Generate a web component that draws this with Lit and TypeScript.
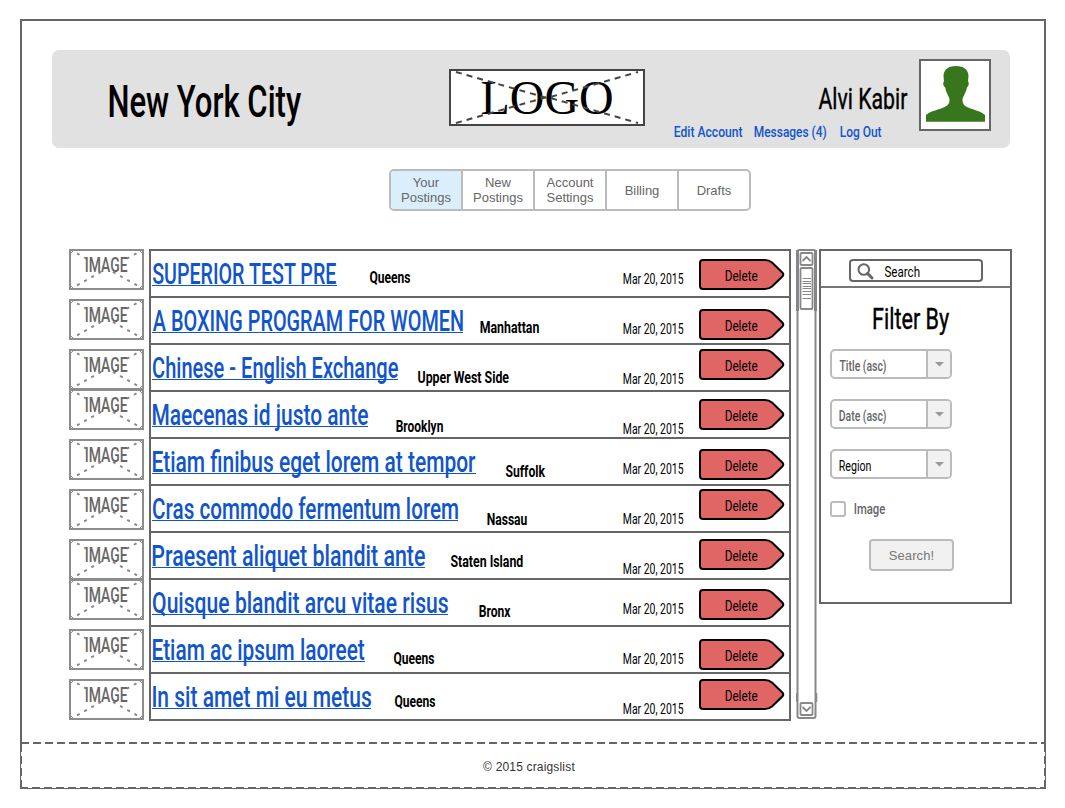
import { LitElement, html, svg, css } from "lit";
import { customElement } from "lit/decorators.js";

interface Posting {
  title: string;
  titleWidth: number;
  region: string;
  regionGap: number;
  regionWidth: number;
  regionTop: number;
  dateTop: number;
  deleteTop: number;
  thumbGap: number;
}

const p = (
  title: string, titleWidth: number, region: string, regionGap: number, regionWidth: number,
  regionTop: number, dateTop: number, deleteTop: number, thumbGap: number,
): Posting => ({ title, titleWidth, region, regionGap, regionWidth, regionTop, dateTop, deleteTop, thumbGap });

const POSTINGS: Posting[] = [
  p("SUPERIOR TEST PRE", 185, "Queens", 32, 41, 21, 23, 8, 0),
  p("A BOXING PROGRAM FOR WOMEN", 311, "Manhattan", 17, 59, 24, 26, 11, 9),
  p("Chinese - English Exchange", 246, "Upper West Side", 19, 92, 27, 29, 4, 9),
  p("Maecenas id justo ante", 216, "Brooklyn", 28, 47, 29, 32, 7, -1),
  p("Etiam finibus eget lorem at tempor", 324, "Suffolk", 29, 40, 27, 25, 10, 9),
  p("Cras commodo fermentum lorem", 306, "Nassau", 29, 40, 28, 28, 3, 9),
  p("Praesent aliquet blandit ante", 273, "Staten Island", 25, 73, 23, 31, 6, 9),
  p("Quisque blandit arcu vitae risus", 296, "Bronx", 31, 31, 26, 24, 9, -1),
  p("Etiam ac ipsum laoreet", 213, "Queens", 28, 41, 26, 27, 12, 9),
  p("In sit amet mi eu metus", 219, "Queens", 23, 41, 22, 30, 5, 9),
];

const pen = document.createElement("canvas").getContext("2d")!;

/* Text whose ink starts at x and spans the given width, narrowed from its natural setting. */
const narrow = (
  text: string, x: number, y: number, width: number, size: number, weight = 400, family = "Roboto",
) => {
  pen.font = `${weight} ${size}px "${family}"`;
  const m = pen.measureText(text);
  const k = width / (m.actualBoundingBoxLeft + m.actualBoundingBoxRight);
  return svg`<text transform="translate(${x + m.actualBoundingBoxLeft * k} ${y}) scale(${k} 1)"
    font-size=${size} font-weight=${weight}>${text}</text>`;
};

/* Condensed lettering in a box as tall as a capital. */
const fit = (text: string, width: number, size: number, cls = "", weight = 400, underline = false) => {
  const cap = Math.round(size * 0.711);
  return html`<svg class="fit ${cls}" width=${width} height=${cap}>
    ${underline ? narrow(text, 0.8, cap, width - 0.8, size, weight) : narrow(text, 0.5, cap, width, size, weight)}
    ${underline ? svg`<rect x="0" y=${cap + 1} width=${width} height="1"></rect>` : ""}
  </svg>`;
};

@customElement("app-root")
export class AppRoot extends LitElement {
  static styles = css`
    :host { display: block; box-sizing: border-box; width: 1065px; height: 808px; padding: 19px 19px 19px 20px; background: #fff; font-family: "Liberation Sans", Arial, sans-serif; overflow: hidden; }
    * { box-sizing: border-box; }
    svg { display: block; flex: none; overflow: visible; }
    .fit { font-family: Roboto, sans-serif; fill: #000; }
    .frame { width: 1026px; height: 770px; border: 2px solid #666; display: flex; flex-direction: column; }
    .header { height: 98px; flex: none; margin: 29px 34px 0 30px; border-radius: 7px; background: #e1e1e1; display: flex; align-items: flex-start; }
    .city { margin: 36px 0 0 57px; }
    .logo { margin: 19px 0 0 148px; }
    .logo text { font-family: "Liberation Serif", serif; }
    .account { width: 233px; margin: 38px 0 0 29px; display: flex; flex-direction: column; }
    .name { align-self: flex-end; }
    .name, .heading { stroke: #000; stroke-width: 0.4px; }
    .links { display: flex; margin-top: 16.5px; }
    .link { fill: #1155cc; }
    .links .link { margin-right: 12px; }
    .links .link + .link { margin-right: 14px; }
    .avatar { margin: 9px 0 0 12px; }
    .tabs { display: flex; flex: none; width: 362px; height: 42px; margin: 21px 0 0 367px; border: 2px solid #bbb; border-radius: 5px; overflow: hidden; }
    .tab { width: 72px; display: flex; align-items: center; justify-content: center; text-align: center; font-size: 13px; line-height: 15px; color: #666; border-right: 2px solid #bbb; padding: 0 8px; }
    .tab:first-child { background: #daeefc; }
    .tab:last-child { border-right: 0; width: 70px; }
    .main { display: flex; align-items: flex-start; flex: none; height: 472px; margin: 38px 0 0 47px; }
    .thumbs { width: 75px; flex: none; }
    .list { width: 642px; height: 472px; flex: none; margin-left: 5px; border: 2px solid #666; border-top: 0; }
    .row { display: flex; align-items: flex-start; height: 47px; border-top: 2px solid #666; }
    .title { margin: 12px 0 0 1px; fill: #1155cc; }
    .date { margin-left: auto; }
    .delete { margin: 0 4px 0 16px; }
    .delete text { font-family: Roboto, sans-serif; }
    .scroll { margin-left: 5px; }
    .panel { width: 193px; height: 355px; flex: none; margin-left: 2px; border: 2px solid #666; display: flex; flex-direction: column; align-items: flex-start; }
    .searchbar { width: 100%; height: 37px; flex: none; border-bottom: 2px solid #777; padding: 8px 0 0 28px; }
    .search { width: 134px; height: 23px; border: 2px solid #666; border-radius: 4px; display: flex; align-items: flex-start; padding: 2px 0 0 6px; }
    .search .fit { margin: 4px 0 0 10px; }
    .heading { margin: 20px 0 20px 52px; }
    .select { display: flex; width: 122px; height: 30px; flex: none; margin: 0 0 20px 9px; border: 2px solid #bbb; border-radius: 5px; overflow: hidden; }
    .value { flex: 1; padding: 10px 0 0 7px; }
    .arrow { width: 24px; flex: none; background: #f1f1f1; border-left: 2px solid #bbb; padding: 11px 0 0 7px; }
    .muted { fill: #666; }
    .check { display: flex; margin: 2px 0 0 9px; }
    .box { width: 16px; height: 16px; border: 2px solid #bbb; border-radius: 3px; }
    .check .fit { margin: 3px 0 0 8px; }
    .go { width: 85px; height: 32px; margin: 22px 0 0 48px; border: 2px solid #bbb; border-radius: 4px; background: #f1f1f1; color: #777; font-size: 13px; line-height: 29px; letter-spacing: 0.1px; text-align: center; }
    .footer { position: relative; flex: none; height: 45px; margin-top: 21px; text-align: center; }
    .edge { position: absolute; left: -2px; top: 0; }
    .copy { font-size: 12px; line-height: 14px; letter-spacing: 0.17px; color: #333; padding: 18px 8px 0 0; }
  `;

  private logo() {
    return html`<svg class="logo" width="196" height="57">
      <rect x="1" y="1" width="194" height="55" fill="#fff" stroke="#444" stroke-width="2"></rect>
      ${narrow("LOGO", 32.5, 44.5, 130.5, 48, 400, "Liberation Serif")}
      <path d="M7 3L98 29L189 3M7 54L98 28L189 54" fill="none" stroke="#444" stroke-width="2" stroke-dasharray="6 5"></path>
    </svg>`;
  }

  private avatar() {
    return html`<svg class="avatar" width="72" height="72">
      <rect x="1" y="1" width="70" height="70" fill="#fff" stroke="#666" stroke-width="2"></rect>
      <path d="M37 7C45 7 49.500 11 49.500 17L49 22.500C50.300 23 50 27 48 28.500C47 33 45 36.500 43.700 39C43 43 44 45.500 47 47.500C54 51 61 51.500 66 56V62.700H7V56C12 51.500 20 51 26.500 47.500C30 45.500 31 43 30.300 39C29 36.500 27 33 26.200 28.500C24 27 23.700 23 25 22.500L24.500 17C24.500 11 29 7 37 7Z" fill="#38761d"></path>
    </svg>`;
  }

  private thumb(gap: number) {
    return html`<svg class="fit muted" style="margin-top:${gap}px" width="75" height="41">
      <rect x="1" y="1" width="73" height="39" fill="#fff" stroke="#8c8c8c" stroke-width="2"></rect>
      <path d="M2 4L4 2M71 2L73 4M2 37L4 39M71 39L73 37" stroke="#8c8c8c" stroke-width="1"></path>
      <path d="M8 4.300L20 11M67.500 4.300L55.500 11M8 36.400L33 22.400M68 36.400L43 22.400" fill="none" stroke="#888" stroke-width="1.900" stroke-dasharray="3 5.200"></path>
      ${narrow("IMAGE", 16.5, 22.6, 42, 19.5, 500)}
    </svg>`;
  }

  private remove(top: number) {
    return html`<svg class="delete" style="margin-top:${top}px" width="86" height="31">
      <path d="M4 1H66Q70 1 73 3.500L83.300 13.500Q85.300 15.500 83.300 17.500L73 27.500Q70 30 66 30H4Q1 30 1 27V4Q1 1 4 1Z" fill="#e06666" stroke="#000" stroke-width="2"></path>
      ${narrow("Delete", 26.5, 21.5, 32.5, 14.5)}
    </svg>`;
  }

  private scrollbar() {
    return html`<svg class="scroll" width="21" height="470" fill="none" stroke="#888">
      <rect x="1.500" y="1" width="18" height="468" rx="2" stroke-width="2"></rect>
      <path d="M1.500 1V62M19.500 1V62" stroke="#85858a" stroke-width="3"></path>
      <path d="M.8 444V453M20.500 444V453" stroke-width="1.500"></path>
      <rect x="4.500" y="4" width="12" height="12" rx="1" stroke-width="1.800" fill="#fff"></rect>
      <path d="M6.500 12L10.500 8L14.500 12" stroke-width="1.800"></path>
      <rect x="4.500" y="19" width="12" height="41" rx="1" stroke-width="1.800" fill="#fff"></rect>
      <path d="M6.500 29.500h8.500M6.500 32.500h8.500M6.500 34.500h8.500M6.500 37.500h8.500M6.500 39.500h8.500M6.500 42.500h8.500M6.500 45.500h8.500M6.500 49.500h8.500"></path>
      <rect x="4.500" y="454" width="12" height="12" rx="1" stroke-width="1.800" fill="#fff"></rect>
      <path d="M6.500 458L10.500 462L14.500 458" stroke-width="1.800"></path>
    </svg>`;
  }

  private select(text: string, width: number, cls: string) {
    return html`<div class="select">
      <div class="value">${fit(text, width, 14.5, cls, cls ? 500 : 400)}</div>
      <div class="arrow"><svg width="9" height="5"><path d="M0 0H9L4.500 4.500Z" fill="#999"></path></svg></div>
    </div>`;
  }

  render() {
    return html`<div class="frame">
      <div class="header">
        ${fit("New York City", 192, 44, "city", 500)}
        ${this.logo()}
        <div class="account">
          ${fit("Alvi Kabir", 89, 29, "name")}
          <div class="links">
            ${fit("Edit Account", 68, 15.5, "link", 500)}
            ${fit("Messages (4)", 72, 15.5, "link", 500)}
            ${fit("Log Out", 41, 15.5, "link", 500)}
          </div>
        </div>
        ${this.avatar()}
      </div>
      <div class="tabs">
        ${["Your Postings", "New Postings", "Account Settings", "Billing", "Drafts"].map((t) => html`<div class="tab">${t}</div>`)}
      </div>
      <div class="main">
        <div class="thumbs">${POSTINGS.map((x) => this.thumb(x.thumbGap))}</div>
        <div class="list">
          ${POSTINGS.map((x) => html`<div class="row">
            ${fit(x.title, x.titleWidth, 29.5, "title", 500, true)}
            <div style="margin:${x.regionTop}px 0 0 ${x.regionGap}px">${fit(x.region, x.regionWidth, 15.8, "region", 700)}</div>
            <div class="date" style="margin-top:${x.dateTop}px">${fit("Mar 20, 2015", 60, 14.5)}</div>
            ${this.remove(x.deleteTop)}
          </div>`)}
        </div>
        ${this.scrollbar()}
        <div class="panel">
          <div class="searchbar">
            <div class="search">
              <svg width="17" height="17" fill="none" stroke="#666"><circle cx="6.800" cy="6.500" r="5.300" stroke-width="2"></circle><path d="M10.500 10.500L15 15" stroke-width="3" stroke-linecap="round"></path></svg>
              ${fit("Search", 35, 14)}
            </div>
          </div>
          ${fit("Filter By", 76, 29, "heading")}
          ${this.select("Title (asc)", 47, "muted")}
          ${this.select("Date (asc)", 47, "muted")}
          ${this.select("Region", 32, "")}
          <div class="check"><div class="box"></div>${fit("Image", 31, 14.5, "muted", 500)}</div>
          <div class="go">Search!</div>
        </div>
      </div>
      <div class="footer">
        <svg class="edge" width="1026" height="47" fill="none">
          <path d="M1 1H1025" stroke="#666" stroke-width="2" stroke-dasharray="8 4"></path>
          <path d="M1.500 2V46M1024.500 2V46" stroke="#fff" stroke-width="1" stroke-dasharray="4 8" stroke-dashoffset="-8"></path>
          <path d="M2 45.500H1025" stroke="#fff" stroke-width="1" stroke-dasharray="4 8" stroke-dashoffset="-6"></path>
        </svg>
        <div class="copy">© 2015 craigslist</div>
      </div>
    </div>`;
  }
}
